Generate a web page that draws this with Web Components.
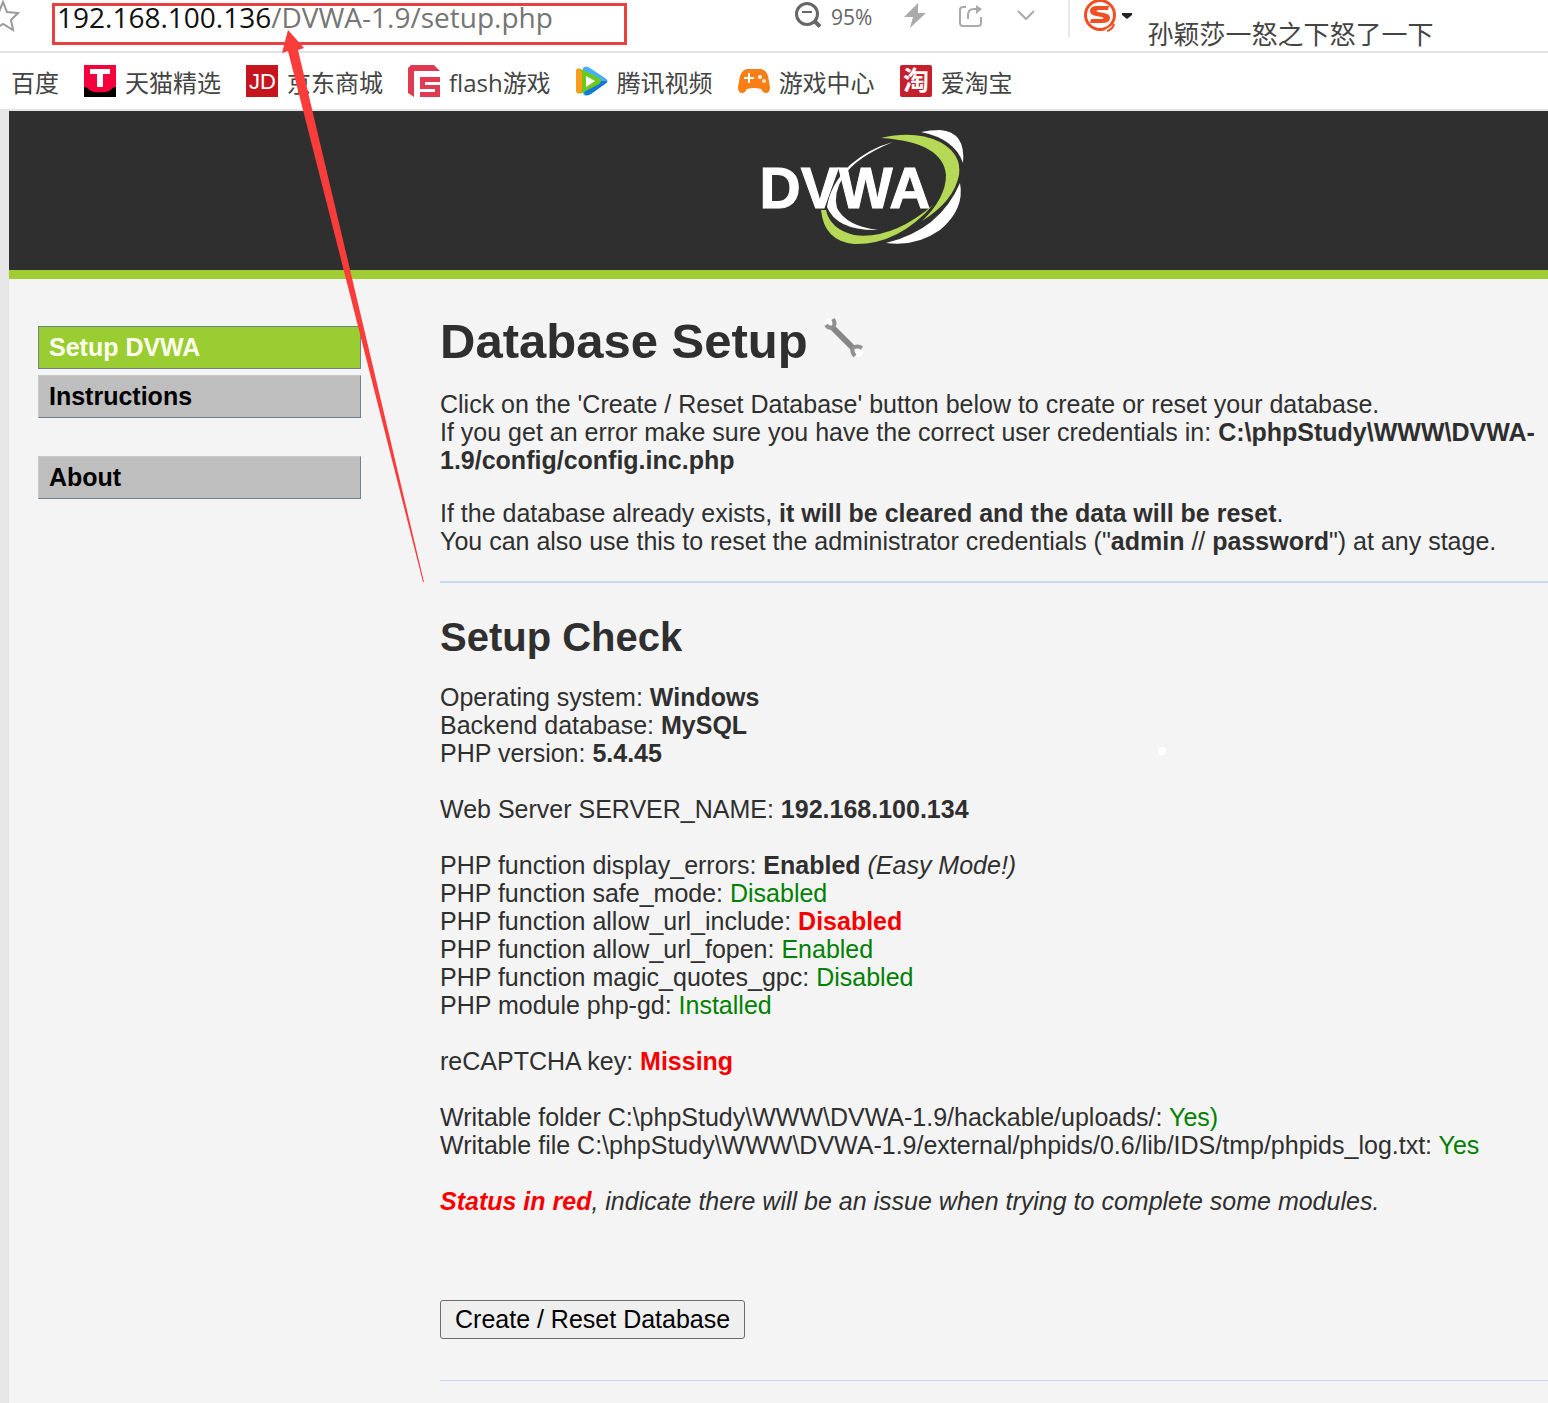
<!DOCTYPE html>
<html lang="en">
<head>
<meta charset="utf-8">
<title>Setup :: Damn Vulnerable Web Application (DVWA)</title>
<style>
body { margin: 0; background: #e6e6e6; overflow-x: hidden; font-family: "Liberation Sans", "Noto Sans CJK SC", sans-serif; }
</style>
</head>
<body>
<browser-window></browser-window>
<script>
const define = (name, html) => {
  const template = document.createElement('template');
  template.innerHTML = html;
  customElements.define(name, class extends HTMLElement {
    constructor() {
      super();
      this.attachShadow({ mode: 'open' }).append(template.content.cloneNode(true));
    }
  });
};

define('address-bar', `
<style>
:host { display: flex; height: 51px; background: #fff; border-bottom: 2px solid #e4e4e4; font-family: "Open Sans", "Noto Sans CJK SC", sans-serif; }
.row { display: flex; align-items: center; height: 34px; }
.place { width: 795px; }
.url { font-size: 28px; line-height: 34px; color: #757575; margin-left: 37px; white-space: nowrap; outline: none; }
.url b { font-weight: 400; color: #111; }
button { display: flex; border: 0; padding: 0; background: none; font: inherit; color: #666; }
.zoom { gap: 10px; align-items: center; font-size: 21px; line-height: 30px; }
.tools { gap: 32px; }
.icons { display: flex; align-items: center; gap: 33px; }
.search { display: flex; align-items: flex-start; margin-left: 32px; border-left: 2px solid #e8e8e8; height: 37px; padding-left: 14px; gap: 15px; }
.query { font-size: 26px; line-height: 34px; color: #444; padding-top: 17px; white-space: nowrap; }
svg { display: block; }
</style>
<div class="row place">
  <button aria-label="Bookmark"><svg width="20" height="34" fill="none" stroke="#999" stroke-width="2"><path d="M3 2L7 12 18 13 11 20 13 30 3 24-7 30-5 20-12 13-1 12z"/></svg></button>
  <div class="url" role="textbox" aria-label="Address" contenteditable="true" spellcheck="false"><b>192.168.100.136</b>/DVWA-1.9/setup.php</div>
</div>
<div class="row tools">
  <button class="zoom"><svg width="26" height="34" fill="none" stroke="#666" stroke-width="3"><circle cx="12" cy="14" r="10.500"/><path d="M7 12h10" stroke-width="2"/><path d="M19 20.500l6 6" stroke-width="4"/></svg><span>95%</span></button>
  <div class="icons">
    <button aria-label="Speed mode"><svg width="22" height="34" fill="#aaa"><path d="M14 3L0 17h9L6 28 22 13h-8z"/></svg></button>
    <button aria-label="Share"><svg width="24" height="34" fill="none" stroke="#aaa" stroke-width="2"><path d="M7 7H4Q1 7 1 10V23Q1 26 4 26H19Q22 26 22 23V17M9 19V15Q9 9 15 9H19"/><path d="M17 5l6 4-6 5z" fill="#aaa" stroke="none"/></svg></button>
    <button aria-label="More"><svg width="20" height="34" fill="none" stroke="#aaa" stroke-width="2"><path d="M2 11l8 8 8-8"/></svg></button>
  </div>
</div>
<div class="search">
  <button aria-label="Search engine"><svg width="48" height="34"><circle cx="16" cy="15" r="14.500" fill="none" stroke="#f04e23" stroke-width="3"/><path d="M22 31l8-5" stroke="#fff" stroke-width="3"/><path d="M23 31q6-2 7-7" fill="none" stroke="#f04e23" stroke-width="2"/><path d="M25 6H13Q6 6 6 11Q6 15 12 16L18 17Q21 18 18 19H7L6 23H18Q26 23 26 18Q26 14 20 13L14 12Q11 11 14 10H24Z" fill="#f04e23"/><path d="M38 13h10v2l-5 4-5-4z" fill="#222"/></svg></button>
  <span class="query">孙颖莎一怒之下怒了一下</span>
</div>`);

define('bookmark-link', `
<style>
:host { display: block; }
a { display: flex; align-items: center; gap: 9px; color: #444; text-decoration: none; font-size: 24px; line-height: 32px; white-space: nowrap; }
span { padding-top: 3px; }
</style>
<a href="#"><slot name="icon"></slot><span><slot></slot></span></a>`);

define('bookmark-bar', `
<style>
:host { display: flex; gap: 25px; align-items: center; height: 56px; padding-left: 11px; background: #fff; border-bottom: 2px solid #e4e4e4; font-family: "Open Sans", "Noto Sans CJK SC", sans-serif; }
svg { display: block; width: 32px; height: 32px; }
text { font-family: "Liberation Sans", "Noto Sans CJK SC", sans-serif; }
</style>
<bookmark-link>百度</bookmark-link>
<bookmark-link><svg slot="icon" viewBox="0 0 32 32"><path d="M0 0h32v32H0z" fill="#f5003c"/><path d="M0 22q4 0 5 3 5 3 11 2 6 1 11-2 1-3 5-3v10H0z" fill="#000"/><path d="M6 4h20v5h-7v13h-6V9H6z" fill="#fff"/></svg>天猫精选</bookmark-link>
<bookmark-link><svg slot="icon" viewBox="0 0 32 32"><path d="M0 0h32v32H0z" fill="#c5151f"/><text x="3" y="24" font-size="22" fill="#fff">JD</text></svg>京东商城</bookmark-link>
<bookmark-link><svg slot="icon" viewBox="0 0 32 32" fill="#df3a52"><path d="M3 0h23l6 6H6v26L0 28V3z"/><path d="M12 12h20v5H17v3h15v12H12v-5h15v-3H12z"/></svg>flash游戏</bookmark-link>
<bookmark-link><svg slot="icon" viewBox="0 0 32 32"><path d="M7 3Q9 0 14 3L29 13Q34 16 29 19L14 29Q8 33 7 28z" fill="#45b0f2"/><path d="M8 28Q10 32 15 29L29 19Q32 17 31 16H24L10 25z" fill="#1677d8"/><path d="M0 7Q0 2 5 4L23 13Q27 16 23 19L6 28Q0 30 0 25z" fill="#6fc91d"/><path d="M0 7Q0 2 5 4L6 8V24L5 28Q0 29 0 25z" fill="#ff9d1b"/><path d="M10 11l9 5-9 6z" fill="#fff"/></svg>腾讯视频</bookmark-link>
<bookmark-link><svg slot="icon" viewBox="0 0 32 32"><path d="M9 4H23Q28 5 30 11L32 22Q32 28 28 28Q25 28 23 24Q16 22 9 24Q7 28 4 28Q0 28 0 22L2 11Q4 5 9 4z" fill="#f77f16"/><path d="M6 13h10M11 8v10" stroke="#fff" stroke-width="2"/><circle cx="22" cy="12" r="2" fill="#fff"/><circle cx="26" cy="16" r="2" fill="#ffe0b8"/></svg>游戏中心</bookmark-link>
<bookmark-link><svg slot="icon" viewBox="0 0 32 32"><rect width="32" height="32" rx="2" fill="#c5202c"/><text x="3" y="25" font-size="26" font-weight="700" fill="#fff">淘</text></svg>爱淘宝</bookmark-link>`);

define('site-header', `
<style>
:host { display: flex; justify-content: center; padding: 19px 0 26px 171px; background: #2f2f2f; border-bottom: 9px solid #a1cc33; }
svg { display: block; overflow: visible; }
text { font: 700 57px "Liberation Sans", sans-serif; }
</style>
<svg width="200" height="114" viewBox="0 0 200 114" role="img" aria-label="DVWA">
  <path d="M129 12Q106 18 86 35Q66 55 63 77Q73 101 114 100Q82 96 73 78Q69 64 79 47Q92 27 129 12z" fill="#fff"/>
  <path d="M157 2Q166 0 176 0Q202 2 199 33Q191 9 157 2z" fill="#fff"/>
  <path d="M196 53Q201 79 176 100Q152 117 122 113Q176 100 196 53z" fill="#fff"/>
  <path d="M117 8Q151 0 176 12Q198 24 195 45Q190 71 158 91Q182 68 182 45Q179 12 117 8z" fill="#b5d956"/>
  <path d="M57 80Q60 111 90 114Q134 115 169 75Q128 110 90 105Q66 99 62 80z" fill="#b5d956"/>
  <text x="81" y="78" text-anchor="middle" fill="#fff" stroke="#fff" stroke-width="1">DVWA</text>
</svg>`);

define('nav-item', `
<style>
:host { display: block; }
a { display: block; padding: 7px 10px; border: 1px solid #708090; border-top-color: #c8c8c8; border-left-color: #c8c8c8; background: #bebebe; color: #000; font-weight: 700; font-size: 25px; line-height: 27px; text-decoration: none; }
:host([current]) a { background: #9acd32; border-color: #708090; color: #fffff0; }
</style>
<a href="#"><slot></slot></a>`);

define('side-menu', `
<style>
:host { display: block; }
nav { display: flex; flex-direction: column; gap: 38px; }
div { display: flex; flex-direction: column; gap: 6px; }
</style>
<nav>
  <div><nav-item current>Setup DVWA</nav-item><nav-item>Instructions</nav-item></div>
  <div><nav-item>About</nav-item></div>
</nav>`);

define('check-line', `
<style>
:host { display: block; }
:host([group]) { margin-top: 28px; }
</style>
<slot></slot>`);

define('setup-content', `
<style>
:host { display: block; font-size: 25px; line-height: 28px; color: #2f2f2f; }
h1 { display: flex; align-items: center; gap: 16px; margin: 0 0 21px; font-size: 49px; line-height: 56px; }
h2 { margin: 31px 0 23px; font-size: 40px; line-height: 46px; }
p { margin: 0 0 25px; }
hr { border: 0; height: 2px; margin: 26px 0 0; background: #c8d8f0; }
hr.thin { height: 1px; }
.ok { color: #008000; }
.bad { color: #f80000; font-weight: 700; }
form { margin: 85px 0 41px; }
button { display: block; height: 39px; padding: 0 14px 2px; border: 1px solid #6b6b6b; border-radius: 3px; background: #efefef; color: #000; font: inherit; }
h1 svg { margin-top: -8px; }
</style>
<h1>Database Setup <svg width="40" height="40" viewBox="0 0 40 40" aria-hidden="true"><circle cx="5" cy="5" r="3.500" fill="#fff"/><circle cx="35" cy="36" r="4" fill="#fff"/><path d="M8 10L30 32" stroke="#868686" stroke-width="6"/><path d="M2 8Q5 12 9 10Q12 7 9 2M38 31Q33 28 29 31Q27 35 31 39" fill="none" stroke="#909090" stroke-width="4"/></svg></h1>
<p>Click on the 'Create / Reset Database' button below to create or reset your database.<br>
If you get an error make sure you have the correct user credentials in: <b>C:\\phpStudy\\WWW\\DVWA-<wbr>1.9/config/config.inc.php</b></p>
<p>If the database already exists, <b>it will be cleared and the data will be reset</b>.<br>
You can also use this to reset the administrator credentials ("<b>admin</b> // <b>password</b>") at any stage.</p>
<hr>
<h2>Setup Check</h2>
<check-line>Operating system: <b>Windows</b></check-line>
<check-line>Backend database: <b>MySQL</b></check-line>
<check-line>PHP version: <b>5.4.45</b></check-line>
<check-line group>Web Server SERVER_NAME: <b>192.168.100.134</b></check-line>
<check-line group>PHP function display_errors: <b>Enabled</b> <i>(Easy Mode!)</i></check-line>
<check-line>PHP function safe_mode: <span class="ok">Disabled</span></check-line>
<check-line>PHP function allow_url_include: <span class="bad">Disabled</span></check-line>
<check-line>PHP function allow_url_fopen: <span class="ok">Enabled</span></check-line>
<check-line>PHP function magic_quotes_gpc: <span class="ok">Disabled</span></check-line>
<check-line>PHP module php-gd: <span class="ok">Installed</span></check-line>
<check-line group>reCAPTCHA key: <span class="bad">Missing</span></check-line>
<check-line group>Writable folder C:\\phpStudy\\WWW\\DVWA-1.9/hackable/uploads/: <span class="ok">Yes)</span></check-line>
<check-line>Writable file C:\\phpStudy\\WWW\\DVWA-1.9/external/phpids/0.6/lib/IDS/tmp/phpids_log.txt: <span class="ok">Yes</span></check-line>
<check-line group><i><span class="bad">Status in red</span>, indicate there will be an issue when trying to complete some modules.</i></check-line>
<form onsubmit="return false"><button type="submit">Create / Reset Database</button></form>
<hr class="thin">`);

define('markup-overlay', `
<style>
:host { position: absolute; top: 0; left: 0; pointer-events: none; }
svg { display: block; overflow: visible; }
</style>
<svg width="640" height="600" aria-hidden="true">
  <rect x="53.500" y="4.500" width="572" height="39" fill="none" stroke="#e84142" stroke-width="3"/>
  <path d="M288 30L304 48 298 50 424 582 423 582 288 51 282 53z" fill="#fa3c3a"/>
  <circle cx="1162" cy="751" r="4" fill="#fff"/>
</svg>`);

define('browser-window', `
<style>
:host { display: flex; flex-direction: column; min-height: 100vh; position: relative; }
.page { flex: 1; margin-left: 9px; background: #f4f4f4; }
.columns { display: grid; grid-template-columns: 323px minmax(0, 1fr); column-gap: 79px; padding: 34px 0 21px 29px; }
side-menu { padding-top: 13px; }
</style>
<address-bar></address-bar>
<bookmark-bar></bookmark-bar>
<div class="page">
  <site-header></site-header>
  <div class="columns"><side-menu></side-menu><setup-content></setup-content></div>
</div>
<markup-overlay></markup-overlay>`);
</script>
</body>
</html>
